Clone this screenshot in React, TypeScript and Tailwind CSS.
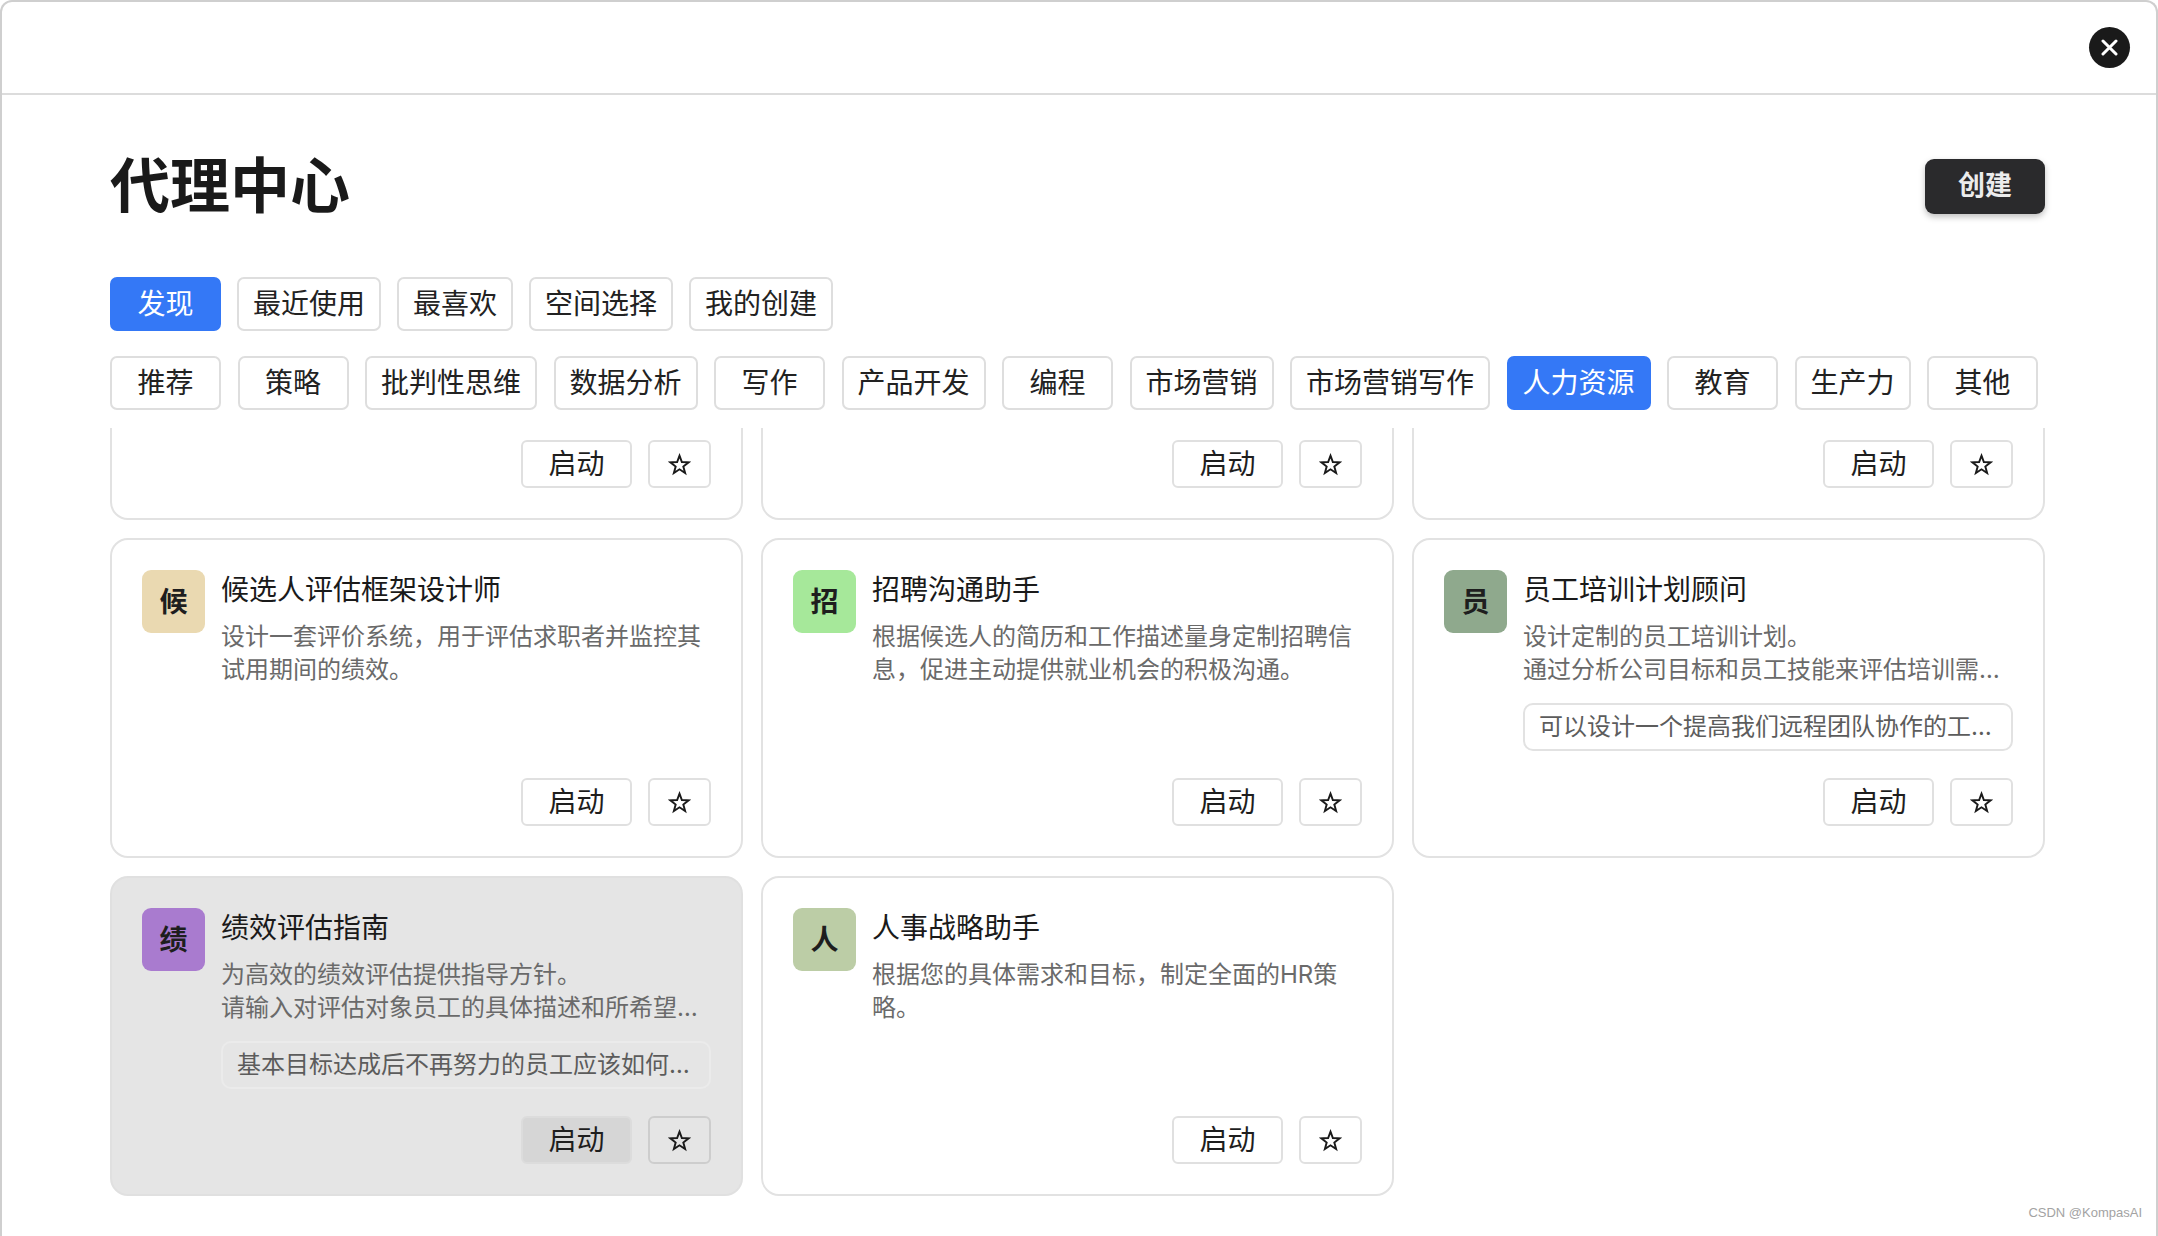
import React, { useEffect, useRef } from 'react';

interface Agent {
  avatar: string;
  color: string;
  title: string;
  desc: string;
  prompt?: string;
  hovered?: boolean;
}

const topTabs = ['发现', '最近使用', '最喜欢', '空间选择', '我的创建'];
const categories = [
  '推荐', '策略', '批判性思维', '数据分析', '写作', '产品开发', '编程',
  '市场营销', '市场营销写作', '人力资源', '教育', '生产力', '其他',
];

const agents: Agent[] = [
  {
    avatar: '薪',
    color: 'bg-[#f2c9a8]',
    title: '薪酬福利顾问',
    desc: '帮助制定有竞争力的薪酬与福利方案。\n结合行业数据和公司预算给出建议。',
    prompt: '如何为初创团队设计合理的期权激励方案？',
  },
  {
    avatar: '面',
    color: 'bg-[#b9d4f2]',
    title: '面试问题生成器',
    desc: '根据岗位要求生成结构化的面试问题，帮助面试官全面考察候选人。',
  },
  {
    avatar: '离',
    color: 'bg-[#e6b8c6]',
    title: '离职面谈助手',
    desc: '引导离职面谈流程，收集员工反馈并总结改进建议。',
  },
  {
    avatar: '候',
    color: 'bg-[#ead9b1]',
    title: '候选人评估框架设计师',
    desc: '设计一套评价系统，用于评估求职者并监控其试用期间的绩效。',
  },
  {
    avatar: '招',
    color: 'bg-[#a6e89a]',
    title: '招聘沟通助手',
    desc: '根据候选人的简历和工作描述量身定制招聘信息，促进主动提供就业机会的积极沟通。',
  },
  {
    avatar: '员',
    color: 'bg-[#8fa98d]',
    title: '员工培训计划顾问',
    desc: '设计定制的员工培训计划。\n通过分析公司目标和员工技能来评估培训需求，并给出具体的课程安排。',
    prompt: '可以设计一个提高我们远程团队协作的工作坊吗？',
  },
  {
    avatar: '绩',
    color: 'bg-[#a97bcf]',
    title: '绩效评估指南',
    desc: '为高效的绩效评估提供指导方针。\n请输入对评估对象员工的具体描述和所希望达成的目标。',
    prompt: '基本目标达成后不再努力的员工应该如何评估？',
    hovered: true,
  },
  {
    avatar: '人',
    color: 'bg-[#bccda6]',
    title: '人事战略助手',
    desc: '根据您的具体需求和目标，制定全面的HR策略。',
  },
];

const StarIcon = () => (
  <svg width="23" height="23" viewBox="0 0 24 24" fill="none" stroke="#1a1a1a" strokeWidth="2" strokeLinejoin="miter">
    <polygon points="12,2.8 14.47,9.4 21.51,9.71 15.99,14.1 17.88,20.89 12,17 6.12,20.89 8.01,14.1 2.49,9.71 9.53,9.4" />
  </svg>
);

const CloseIcon = () => (
  <svg width="17" height="17" viewBox="0 0 17 17" fill="none" stroke="white" strokeWidth="3" strokeLinecap="round">
    <path d="M2 2L15 15M15 2L2 15" />
  </svg>
);

const AgentCard: React.FC<{ agent: Agent }> = ({ agent }) => {
  const hovered = agent.hovered;
  return (
    <div
      className={`flex flex-col rounded-[18px] border-2 p-[30px] ${
        hovered ? 'bg-[#e5e5e5] border-[#e0e0e0]' : 'bg-white border-[#e2e2e2]'
      }`}
    >
      <div className="flex gap-4">
        <div
          className={`w-[63px] h-[63px] shrink-0 rounded-[9px] flex items-center justify-center text-[28px] font-bold text-[#1e1e1e] ${agent.color}`}
        >
          {agent.avatar}
        </div>
        <div className="flex-1 min-w-0">
          <h3 className="text-[28px] leading-[40px] text-[#1a1a1a]">{agent.title}</h3>
          <p className="mt-[10px] text-[24px] leading-[33px] text-[#6a6a6a] whitespace-pre-line line-clamp-2">
            {agent.desc}
          </p>
          {agent.prompt && (
            <div
              className={`mt-[17px] h-[48px] rounded-[10px] border-2 px-[14px] flex items-center ${
                hovered ? 'border-[#ebebeb]' : 'border-[#e2e2e2] bg-white'
              }`}
            >
              <span className="truncate text-[24px] text-[#5c5c5c]">{agent.prompt}</span>
            </div>
          )}
        </div>
      </div>
      <div className="mt-auto pt-[27px] flex justify-end gap-4">
        <button
          className={`w-[111px] h-[48px] rounded-[6px] border-2 text-[28px] text-[#1e1e1e] flex items-center justify-center ${
            hovered ? 'bg-[#d6d6d6] border-[#dcdcdc]' : 'bg-white border-[#e0e0e0]'
          }`}
        >
          启动
        </button>
        <button
          className={`w-[63px] h-[48px] rounded-[6px] border-2 flex items-center justify-center ${
            hovered ? 'border-[#cdcdcd]' : 'bg-white border-[#e0e0e0]'
          }`}
        >
          <StarIcon />
        </button>
      </div>
    </div>
  );
};

const TabButton: React.FC<{ label: string; active?: boolean }> = ({ label, active }) => (
  <button
    className={`h-[54px] min-w-[111px] px-[14px] rounded-[7px] border-2 text-[28px] flex items-center justify-center ${
      active ? 'bg-[#3478f6] border-[#3478f6] text-white' : 'bg-white border-[#dedede] text-[#222]'
    }`}
  >
    {label}
  </button>
);

export default function App() {
  const listRef = useRef<HTMLDivElement>(null);

  useEffect(() => {
    if (listRef.current) listRef.current.scrollTop = 229;
  }, []);

  return (
    <div className="relative h-[1236px] w-full overflow-hidden bg-white rounded-t-[12px] border-t-2 border-x-2 border-[#cfcfcf] flex flex-col font-['Inter','Noto_Sans_CJK_SC',sans-serif]">
      <div className="h-[93px] shrink-0 border-b-2 border-[#dcdcdc] flex items-center justify-end pr-[26px]">
        <button className="w-[41px] h-[41px] rounded-full bg-[#1a1a1a] flex items-center justify-center">
          <CloseIcon />
        </button>
      </div>

      <div className="flex-1 min-h-0 flex flex-col pt-[55px] pl-[108px] pr-[111px]">
        <div className="flex items-center justify-between">
          <h1 className="text-[60px] leading-[72px] font-bold text-[#1a1a1a]">代理中心</h1>
          <button className="w-[120px] h-[55px] rounded-[9px] bg-[#2a2a2c] text-[#ececec] text-[27px] font-bold shadow-[0_3px_6px_rgba(0,0,0,0.25)] flex items-center justify-center">
            创建
          </button>
        </div>

        <div className="mt-[55px] flex gap-4">
          {topTabs.map((t, i) => (
            <TabButton key={t} label={t} active={i === 0} />
          ))}
        </div>

        <div className="mt-[25px] flex gap-[16.5px]">
          {categories.map((c) => (
            <TabButton key={c} label={c} active={c === '人力资源'} />
          ))}
        </div>

        <div ref={listRef} className="mt-[18px] flex-1 min-h-0 overflow-hidden">
          <div className="grid grid-cols-3 gap-[18px] pb-10">
            {agents.map((a) => (
              <AgentCard key={a.title} agent={a} />
            ))}
          </div>
        </div>
      </div>

      <div className="absolute right-[14px] bottom-[14px] text-[13px] text-[#a3a3a3] font-['Liberation_Sans',sans-serif]">
        CSDN @KompasAI
      </div>
    </div>
  );
}
